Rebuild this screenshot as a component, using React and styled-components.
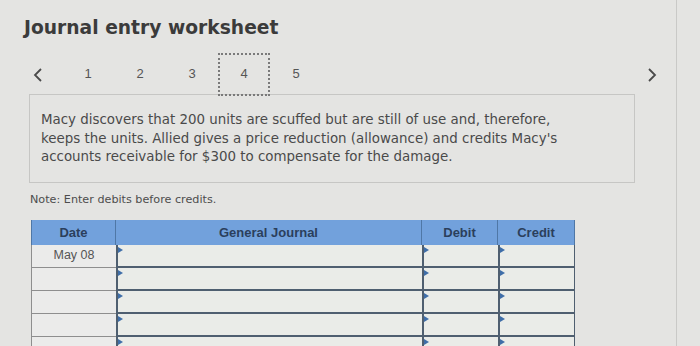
import React from "react";
import styled, { createGlobalStyle } from "styled-components";

const Global = createGlobalStyle`
  html, body { margin: 0; padding: 0; background: #e4e4e2; }
  body { width: 700px; height: 346px; overflow: hidden; }
`;

const Page = styled.div`
  width: 677px;
  height: 346px;
  border-right: 1px solid #c9c9c7;
  box-sizing: border-box;
  overflow: hidden;
`;

const Title = styled.h1`
  margin: 0;
  padding: 15px 0 0 24px;
  font-family: "DejaVu Sans", Verdana, sans-serif;
  font-weight: 700;
  font-size: 18.7px;
  line-height: 26px;
  color: #3b3b3b;
`;

const Pager = styled.div`
  display: flex;
  align-items: center;
  height: 43px;
  margin-top: 12px;
  padding-left: 30px;
`;

const Chevron = styled.div`
  width: 16px;
  height: 20px;
  display: flex;
  align-items: center;
  justify-content: center;
  margin-right: ${(p) => p.$gap || 0}px;
`;

const PageNum = styled.div`
  width: 52px;
  height: 43px;
  box-sizing: border-box;
  display: flex;
  align-items: center;
  justify-content: center;
  padding-bottom: 3px;
  font-family: "Liberation Sans", Arial, sans-serif;
  font-size: 13px;
  color: #555;
  border: 2px dotted ${(p) => (p.$active ? "#7a7a7a" : "transparent")};
`;

const Spacer = styled.div`
  flex: 1;
`;

const Prompt = styled.div`
  margin: -2px 0 0 29px;
  width: 606px;
  height: 89px;
  box-sizing: border-box;
  border: 1px solid #c6c6c4;
  padding: 16px 10px 0 11px;
  font-family: "DejaVu Sans", Verdana, sans-serif;
  font-size: 13.4px;
  line-height: 18.5px;
  color: #4a4a4a;
  white-space: nowrap;
`;

const Line = styled.div``;

const Note = styled.div`
  margin: 10px 0 0 30px;
  font-family: "DejaVu Sans", Verdana, sans-serif;
  font-size: 11.2px;
  line-height: 13px;
  color: #4d4d4d;
`;

const Grid = styled.div`
  margin: 14px 0 0 31px;
  display: grid;
  grid-template-columns: 85px 306px 76px 77px;
  width: 544px;
`;

const Head = styled.div`
  height: 25px;
  background: #72a1dc;
  border-right: 1px solid #4f77a6;
  box-sizing: border-box;
  display: flex;
  align-items: center;
  justify-content: center;
  font-family: "Liberation Sans", Arial, sans-serif;
  font-weight: 700;
  font-size: 13px;
  color: #2b3f5c;
  &:first-child { border-left: 1px solid #4f77a6; }
`;

const DateCell = styled.div`
  height: 23px;
  box-sizing: border-box;
  border-left: 1px solid #8e8e8e;
  border-bottom: 1px solid #8e8e8e;
  background: #ebebea;
  display: flex;
  align-items: center;
  justify-content: center;
  padding-bottom: 2px;
  font-family: "Liberation Sans", Arial, sans-serif;
  font-size: 12.5px;
  color: #555;
`;

const InputCell = styled.div`
  position: relative;
  height: 23px;
  box-sizing: border-box;
  background: #eaece8;
  border-left: 2px solid #4f5f70;
  border-bottom: 2px solid #4f5f70;
  border-right: ${(p) => (p.$last ? "1px solid #4f5f70" : "0")};
  &::before {
    content: "";
    position: absolute;
    left: 0;
    top: 2px;
    border-left: 5px solid #3f6ea8;
    border-top: 3px solid transparent;
    border-bottom: 3px solid transparent;
  }
`;

const LeftIcon = () => (
  <svg width="10" height="14" viewBox="0 0 10 14">
    <path d="M8 1 L2 7 L8 13" fill="none" stroke="#4a4a4a" strokeWidth="1.8" />
  </svg>
);
const RightIcon = () => (
  <svg width="10" height="14" viewBox="0 0 10 14">
    <path d="M2 1 L8 7 L2 13" fill="none" stroke="#4a4a4a" strokeWidth="1.8" />
  </svg>
);

const rows = ["May 08", "", "", "", ""];
const lines = [
  "Macy discovers that 200 units are scuffed but are still of use and, therefore,",
  "keeps the units. Allied gives a price reduction (allowance) and credits Macy's",
  "accounts receivable for $300 to compensate for the damage.",
];

export default function App() {
  return (
    <>
      <Global />
      <Page>
        <Title>Journal entry worksheet</Title>
        <Pager>
          <Chevron $gap={16}>
            <LeftIcon />
          </Chevron>
          {[1, 2, 3, 4, 5].map((n) => (
            <PageNum key={n} $active={n === 4}>
              {n}
            </PageNum>
          ))}
          <Spacer />
          <Chevron $gap={16}>
            <RightIcon />
          </Chevron>
        </Pager>
        <Prompt>
          {lines.map((l) => (
            <Line key={l}>{l}</Line>
          ))}
        </Prompt>
        <Note>Note: Enter debits before credits.</Note>
        <Grid>
          <Head>Date</Head>
          <Head>General Journal</Head>
          <Head>Debit</Head>
          <Head>Credit</Head>
          {rows.map((d, i) => (
            <React.Fragment key={i}>
              <DateCell>{d}</DateCell>
              <InputCell />
              <InputCell />
              <InputCell $last />
            </React.Fragment>
          ))}
        </Grid>
      </Page>
    </>
  );
}
